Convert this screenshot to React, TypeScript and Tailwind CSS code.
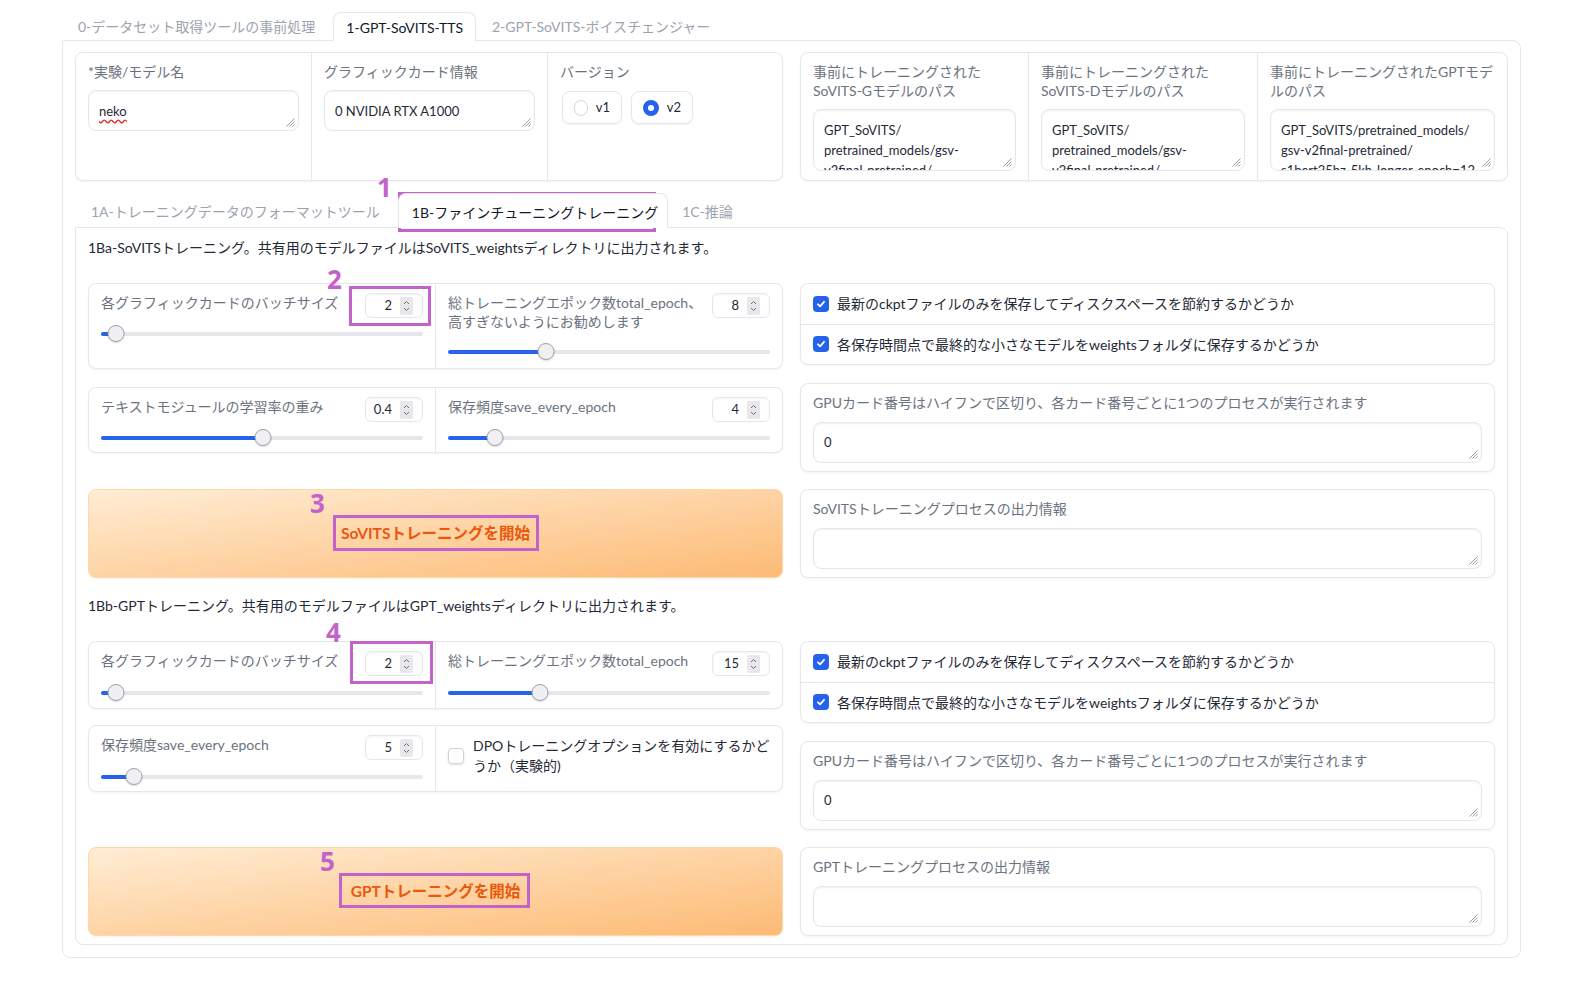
import React from 'react';

const LABEL = 'text-[14px] leading-[20px] text-[#6b7280] whitespace-nowrap';
const BLOCK = 'rounded-lg border border-[#e5e7eb] bg-white shadow-[0_1px_2px_rgba(0,0,0,0.05)]';
const FIELD = 'relative rounded-lg border border-[#e5e7eb] bg-white shadow-[inset_0_1px_2px_rgba(0,0,0,0.06)] overflow-hidden';

function Grip() {
  return (
    <svg className="absolute right-[3px] bottom-[3px]" width="9" height="9" viewBox="0 0 9 9">
      <path d="M8.5 0.5L0.5 8.5M8.5 3.5L3.5 8.5M8.5 6.5L6.5 8.5" stroke="#9a9a9a" strokeWidth="1" fill="none" />
    </svg>
  );
}

function Field({ className, children }: { className: string; children?: React.ReactNode }) {
  return (
    <div className={`${FIELD} ${className}`}>
      <div className="px-[10px] text-[13px] leading-[20px] text-[#1f2937]">{children}</div>
      <Grip />
    </div>
  );
}

function CheckBox({ on }: { on: boolean }) {
  if (!on) {
    return <div className="h-[16px] w-[16px] shrink-0 rounded-[4px] border border-[#d1d5db] bg-white shadow-sm" />;
  }
  return (
    <div className="flex h-[16px] w-[16px] shrink-0 items-center justify-center rounded-[4px] bg-[#2563eb]">
      <svg width="10" height="10" viewBox="0 0 10 10">
        <path d="M2 5.3L4.1 7.3L8 2.8" stroke="#fff" strokeWidth="1.8" fill="none" strokeLinecap="round" strokeLinejoin="round" />
      </svg>
    </div>
  );
}

function NumberBox({ value }: { value: string }) {
  return (
    <div className="mt-[1px] flex h-[25px] w-[58px] shrink-0 items-center justify-end gap-[8px] rounded-md border border-[#e5e7eb] bg-white pr-[9px] text-[13px] text-[#1f2937] shadow-[inset_0_1px_2px_rgba(0,0,0,0.05)]">
      <span>{value}</span>
      <div className="flex h-[18px] w-[13px] items-center justify-center rounded-[2px] bg-[#e8e8ec]">
        <svg width="9" height="14" viewBox="0 0 9 14">
          <path d="M2 5L4.5 2.5L7 5M2 9L4.5 11.5L7 9" stroke="#707070" strokeWidth="1" fill="none" />
        </svg>
      </div>
    </div>
  );
}

function Slider({ pct }: { pct: number }) {
  return (
    <div className="relative flex h-[17px] items-center">
      <div className="h-[4px] w-full rounded-full bg-[#e5e7eb]" />
      <div className="absolute left-0 h-[4px] rounded-full bg-[#2563eb]" style={{ width: `${pct}%` }} />
      <div
        className="absolute top-0 h-[17px] w-[17px] -translate-x-1/2 rounded-full border border-[#9ca3af] bg-[#f0f0f2] shadow-[0_1px_2px_rgba(0,0,0,0.15)]"
        style={{ left: `${pct}%` }}
      />
    </div>
  );
}

function SliderCell({
  label,
  value,
  pct,
  gap,
  divider,
}: {
  label: React.ReactNode;
  value: string;
  pct: number;
  gap: string;
  divider?: boolean;
}) {
  return (
    <div className={`flex-1 px-[12px] pt-[8px] ${divider ? 'border-r border-[#e5e7eb]' : ''}`}>
      <div className="flex items-start justify-between gap-[8px]">
        <div className="text-[14px] leading-[19px] text-[#6b7280] whitespace-nowrap pt-[1px]">{label}</div>
        <NumberBox value={value} />
      </div>
      <div className={gap}>
        <Slider pct={pct} />
      </div>
    </div>
  );
}

function CheckRows() {
  return (
    <div className={`${BLOCK} flex h-[82px] flex-col`}>
      <div className="flex h-[41px] items-center gap-[8px] border-b border-[#e5e7eb] px-[12px]">
        <CheckBox on />
        <span className="text-[14px] text-[#1f2937]">最新のckptファイルのみを保存してディスクスペースを節約するかどうか</span>
      </div>
      <div className="flex h-[40px] items-center gap-[8px] px-[12px]">
        <CheckBox on />
        <span className="text-[14px] text-[#1f2937]">各保存時間点で最終的な小さなモデルをweightsフォルダに保存するかどうか</span>
      </div>
    </div>
  );
}

function LabeledArea({ label, value, className }: { label: string; value: string; className: string }) {
  return (
    <div className={`${BLOCK} px-[12px] pt-[9px] ${className}`}>
      <div className={LABEL}>{label}</div>
      <Field className="mt-[9px] h-[41px] pt-[9px]">{value}</Field>
    </div>
  );
}

function StartButton({ text }: { text: string }) {
  return (
    <div className="flex h-[89px] w-[695px] shrink-0 items-center justify-center rounded-lg border border-[#fed7aa] bg-[linear-gradient(to_bottom_right,#ffedd5,#fdba74)] shadow-[0_1px_2px_rgba(0,0,0,0.05)]">
      <span className="text-[15.5px] font-bold text-[#ea580c]">{text}</span>
    </div>
  );
}

export default function App() {
  return (
    <div className="relative h-[995px] w-[1580px] overflow-hidden bg-white font-['Lato','Noto_Sans_CJK_JP',sans-serif]">
      <div className="ml-[62px] mt-[12px] w-[1459px]">
        {/* top tabs */}
        <div className="relative z-10 flex h-[28px] items-end text-[14px]">
          <div className="flex h-[28px] items-center px-[16px] text-[#9ca3af]">0-データセット取得ツールの事前処理</div>
          <div className="mb-[-1px] ml-[2px] flex h-[29px] items-center rounded-t-lg border border-b-0 border-[#e5e7eb] bg-white px-[12px] text-[#111827]">
            1-GPT-SoVITS-TTS
          </div>
          <div className="flex h-[28px] items-center px-[16px] text-[#9ca3af]">2-GPT-SoVITS-ボイスチェンジャー</div>
        </div>

        <div className="rounded-b-lg rounded-tr-lg border border-[#e5e7eb] px-[12px] pb-[12px] pt-[11px]">
          {/* model info row */}
          <div className="flex h-[129px] gap-[17px]">
            <div className={`${BLOCK} flex w-[708px]`}>
              <div className="w-[236px] border-r border-[#e5e7eb] px-[12px] pt-[9px]">
                <div className={LABEL}>*実験/モデル名</div>
                <Field className="mt-[8px] h-[41px] pt-[10px]">
                  <span className="underline decoration-[#e02424] decoration-wavy underline-offset-[3px]">neko</span>
                </Field>
              </div>
              <div className="w-[236px] border-r border-[#e5e7eb] px-[12px] pt-[9px]">
                <div className={LABEL}>グラフィックカード情報</div>
                <Field className="mt-[8px] h-[41px] pt-[10px]">0 NVIDIA RTX A1000</Field>
              </div>
              <div className="flex-1 px-[12px] pt-[9px]">
                <div className={LABEL}>バージョン</div>
                <div className="mt-[9px] flex gap-[9px] pl-[2px]">
                  <div className="flex h-[33px] w-[60px] items-center gap-[8px] rounded-lg border border-[#e5e7eb] bg-white px-[11px] shadow-[0_1px_2px_rgba(0,0,0,0.06)]">
                    <div className="h-[16px] w-[16px] rounded-full border border-[#d1d5db] bg-white" />
                    <span className="text-[13px] text-[#1f2937]">v1</span>
                  </div>
                  <div className="flex h-[33px] w-[62px] items-center gap-[8px] rounded-lg border border-[#e5e7eb] bg-white px-[11px] shadow-[0_1px_2px_rgba(0,0,0,0.06)]">
                    <div className="h-[16px] w-[16px] rounded-full border-[5px] border-[#2563eb] bg-white" />
                    <span className="text-[13px] text-[#1f2937]">v2</span>
                  </div>
                </div>
              </div>
            </div>

            <div className={`${BLOCK} flex w-[708px]`}>
              <div className="w-[228px] border-r border-[#e5e7eb] px-[12px] pt-[9px]">
                <div className="text-[14px] leading-[19px] text-[#6b7280] whitespace-nowrap">
                  事前にトレーニングされた
                  <br />
                  SoVITS-Gモデルのパス
                </div>
                <Field className="mt-[9px] h-[62px] pt-[10px]">
                  GPT_SoVITS/
                  <br />
                  pretrained_models/gsv-
                  <br />
                  v2final-pretrained/
                </Field>
              </div>
              <div className="w-[229px] border-r border-[#e5e7eb] px-[12px] pt-[9px]">
                <div className="text-[14px] leading-[19px] text-[#6b7280] whitespace-nowrap">
                  事前にトレーニングされた
                  <br />
                  SoVITS-Dモデルのパス
                </div>
                <Field className="mt-[9px] h-[62px] pt-[10px]">
                  GPT_SoVITS/
                  <br />
                  pretrained_models/gsv-
                  <br />
                  v2final-pretrained/
                </Field>
              </div>
              <div className="flex-1 px-[12px] pt-[9px]">
                <div className="text-[14px] leading-[19px] text-[#6b7280] whitespace-nowrap">
                  事前にトレーニングされたGPTモデ
                  <br />
                  ルのパス
                </div>
                <Field className="mt-[9px] h-[62px] pt-[10px]">
                  GPT_SoVITS/pretrained_models/
                  <br />
                  gsv-v2final-pretrained/
                  <br />
                  s1bert25hz-5kh-longer-epoch=12-
                </Field>
              </div>
            </div>
          </div>

          {/* sub tabs */}
          <div className="relative z-10 mt-[12px] flex h-[34px] items-end text-[14px] leading-[20px]">
            <div className="flex h-[34px] items-end px-[16px] pb-[5px] text-[#9ca3af]">1A-トレーニングデータのフォーマットツール</div>
            <div className="mb-[-1px] ml-[2px] flex h-[35px] items-end rounded-t-lg border border-b-0 border-[#e5e7eb] bg-white pb-[5px] pl-[13px] pr-[9px] text-[#111827]">
              1B-ファインチューニングトレーニング
            </div>
            <div className="flex h-[34px] items-end px-[14px] pb-[5px] text-[#9ca3af]">1C-推論</div>
          </div>

          <div className="h-[718px] rounded-b-lg rounded-tr-lg border border-[#e5e7eb] px-[12px] pt-[10px]">
            <div className="text-[14px] leading-[20px] text-[#1f2937]">
              1Ba-SoVITSトレーニング。共有用のモデルファイルはSoVITS_weightsディレクトリに出力されます。
            </div>

            {/* SoVITS params */}
            <div className="mt-[25px] flex gap-[17px]">
              <div className="flex w-[695px] shrink-0 flex-col gap-[18px]">
                <div className={`${BLOCK} flex h-[86px]`}>
                  <SliderCell label="各グラフィックカードのバッチサイズ" value="2" pct={4.7} gap="mt-[7px]" divider />
                  <SliderCell
                    label={
                      <>
                        総トレーニングエポック数total_epoch、
                        <br />
                        高すぎないようにお勧めします
                      </>
                    }
                    value="8"
                    pct={30.3}
                    gap="mt-[12px]"
                  />
                </div>
                <div className={`${BLOCK} flex h-[66px]`}>
                  <SliderCell label="テキストモジュールの学習率の重み" value="0.4" pct={50.2} gap="mt-[7px]" divider />
                  <SliderCell label="保存頻度save_every_epoch" value="4" pct={14.6} gap="mt-[7px]" />
                </div>
              </div>
              <div className="flex flex-1 flex-col gap-[18px]">
                <CheckRows />
                <LabeledArea
                  label="GPUカード番号はハイフンで区切り、各カード番号ごとに1つのプロセスが実行されます"
                  value="0"
                  className="h-[89px]"
                />
              </div>
            </div>

            <div className="mt-[17px] flex gap-[17px]">
              <StartButton text="SoVITSトレーニングを開始" />
              <LabeledArea label="SoVITSトレーニングプロセスの出力情報" value="" className="h-[89px] flex-1" />
            </div>

            <div className="mt-[18px] text-[14px] leading-[20px] text-[#1f2937]">
              1Bb-GPTトレーニング。共有用のモデルファイルはGPT_weightsディレクトリに出力されます。
            </div>

            {/* GPT params */}
            <div className="mt-[25px] flex gap-[17px]">
              <div className="flex w-[695px] shrink-0 flex-col gap-[16px]">
                <div className={`${BLOCK} flex h-[68px]`}>
                  <SliderCell label="各グラフィックカードのバッチサイズ" value="2" pct={4.7} gap="mt-[8px]" divider />
                  <SliderCell label="総トレーニングエポック数total_epoch" value="15" pct={28.5} gap="mt-[8px]" />
                </div>
                <div className={`${BLOCK} flex h-[67px]`}>
                  <SliderCell label="保存頻度save_every_epoch" value="5" pct={10.3} gap="mt-[8px]" divider />
                  <div className="flex flex-1 items-center gap-[9px] self-start px-[12px] pt-[10px]">
                    <CheckBox on={false} />
                    <span className="text-[14px] leading-[20px] text-[#1f2937] whitespace-nowrap">
                      DPOトレーニングオプションを有効にするかど
                      <br />
                      うか（実験的)
                    </span>
                  </div>
                </div>
              </div>
              <div className="flex flex-1 flex-col gap-[18px]">
                <CheckRows />
                <LabeledArea
                  label="GPUカード番号はハイフンで区切り、各カード番号ごとに1つのプロセスが実行されます"
                  value="0"
                  className="h-[89px]"
                />
              </div>
            </div>

            <div className="mt-[17px] flex gap-[17px]">
              <StartButton text="GPTトレーニングを開始" />
              <LabeledArea label="GPTトレーニングプロセスの出力情報" value="" className="h-[89px] flex-1" />
            </div>
          </div>
        </div>
      </div>

      {/* annotations */}
      <div className="pointer-events-none absolute left-[377px] top-[174px] font-['Noto_Sans',sans-serif] text-[26px] font-bold leading-none text-[#c462cc]">1</div>
      <div className="pointer-events-none absolute left-[398px] top-[192px] h-[40px] w-[258px] border-[3px] border-[#c462cc]" />
      <div className="pointer-events-none absolute left-[327px] top-[266px] font-['Noto_Sans',sans-serif] text-[26px] font-bold leading-none text-[#c462cc]">2</div>
      <div className="pointer-events-none absolute left-[349px] top-[286px] h-[40px] w-[82px] border-[3px] border-[#c462cc]" />
      <div className="pointer-events-none absolute left-[310px] top-[490px] font-['Noto_Sans',sans-serif] text-[26px] font-bold leading-none text-[#c462cc]">3</div>
      <div className="pointer-events-none absolute left-[333px] top-[515px] h-[36px] w-[206px] border-[3px] border-[#c462cc]" />
      <div className="pointer-events-none absolute left-[326px] top-[619px] font-['Noto_Sans',sans-serif] text-[26px] font-bold leading-none text-[#c462cc]">4</div>
      <div className="pointer-events-none absolute left-[350px] top-[641px] h-[43px] w-[83px] border-[3px] border-[#c462cc]" />
      <div className="pointer-events-none absolute left-[320px] top-[848px] font-['Noto_Sans',sans-serif] text-[26px] font-bold leading-none text-[#c462cc]">5</div>
      <div className="pointer-events-none absolute left-[339px] top-[873px] h-[35px] w-[191px] border-[3px] border-[#c462cc]" />
    </div>
  );
}
